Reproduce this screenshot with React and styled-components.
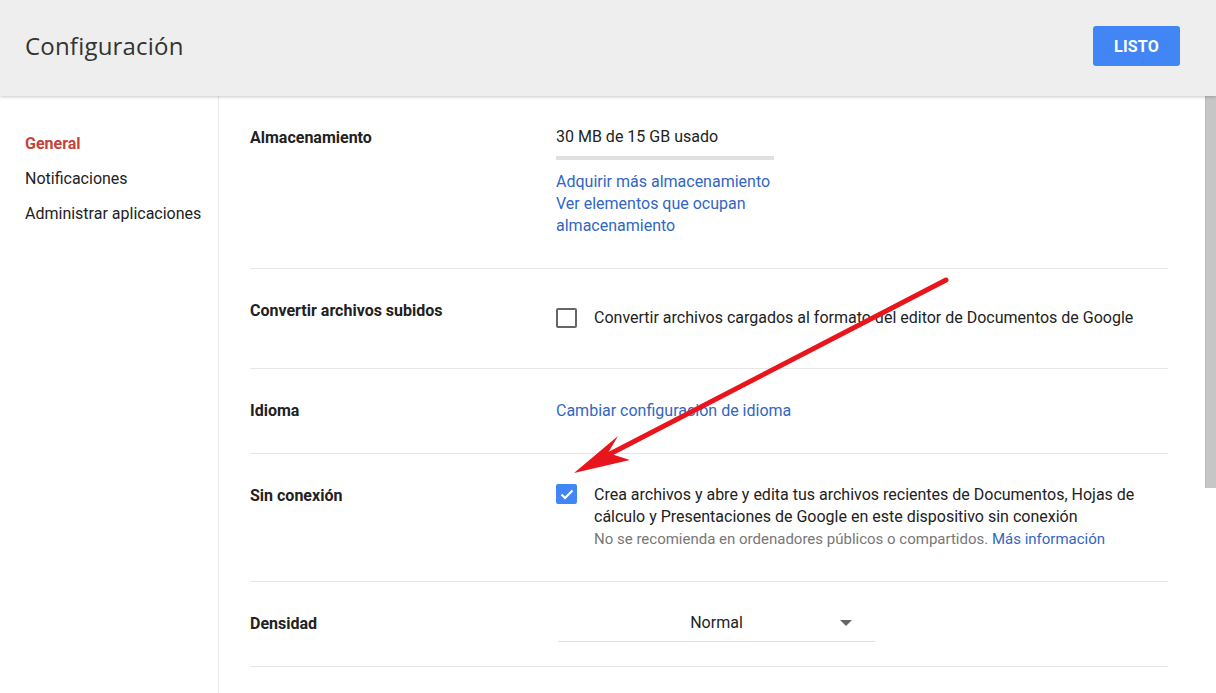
import React from "react";
import styled, { createGlobalStyle } from "styled-components";

const Global = createGlobalStyle`
  html, body { margin: 0; padding: 0; background: #fff; overflow: hidden; }
  body { font-family: Roboto, "Noto Sans", Arial, sans-serif; color: #222; }
  * { box-sizing: border-box; }
`;

const Page = styled.div`
  position: relative;
  width: 1216px;
  height: 693px;
  display: flex;
  flex-direction: column;
  overflow: hidden;
`;

const Header = styled.header`
  height: 96px;
  flex: none;
  background: #eeeeee;
  display: flex;
  align-items: center;
  justify-content: space-between;
  padding: 0 36px 0 25px;
  box-shadow: 0 1px 3px rgba(0, 0, 0, 0.22);
  position: relative;
  z-index: 2;
`;

const Title = styled.h1`
  margin: 0 0 6px 0;
  font-family: "Open Sans", Roboto, sans-serif;
  font-weight: 400;
  font-size: 24px;
  letter-spacing: 0.2px;
  color: #333;
`;

const DoneButton = styled.button`
  width: 87px;
  height: 40px;
  margin-top: -4px;
  border: none;
  border-radius: 3px;
  background: #4285f4;
  color: #fff;
  font-family: Roboto, sans-serif;
  font-weight: 700;
  font-size: 16px;
  letter-spacing: 0.2px;
`;

const Body = styled.div`
  flex: 1;
  display: flex;
  min-height: 0;
`;

const Sidebar = styled.nav`
  width: 219px;
  flex: none;
  border-right: 1px solid #e8e8e8;
  padding-top: 30px;
  display: flex;
  flex-direction: column;
`;

const NavItem = styled.div`
  height: 35px;
  line-height: 35px;
  padding-left: 25px;
  font-size: 16px;
  color: ${(p) => (p.$active ? "#c5433a" : "#222")};
  font-weight: ${(p) => (p.$active ? 700 : 400)};
`;

const Content = styled.main`
  flex: 1;
  padding-left: 31px;
  display: flex;
  flex-direction: column;
`;

const Row = styled.section`
  width: 918px;
  display: grid;
  grid-template-columns: 306px 1fr;
  padding: 30px 0 31px;
  min-height: ${(p) => p.$minH || 0}px;
  border-bottom: 1px solid #e6e6e6;
`;

const Label = styled.div`
  align-self: start;
  margin-top: 1px;
  font-size: 16px;
  font-weight: 700;
  line-height: 22px;
  color: #222;
`;

const Value = styled.div`
  align-self: center;
  font-size: 16px;
  line-height: 22px;
  color: #222;
`;

const UsageBar = styled.div`
  width: 218px;
  height: 4px;
  background: #e0e0e0;
  margin: 8px 0 11px;
`;

const Link = styled.a`
  display: block;
  color: #3266c2;
  text-decoration: none;
  font-size: 16px;
  line-height: 22px;
  width: ${(p) => (p.$w ? p.$w + "px" : "auto")};
`;

const InlineLink = styled.a`
  color: #3266c2;
  text-decoration: none;
`;

const CheckRow = styled.div`
  display: flex;
  align-items: flex-start;
  gap: 17px;
`;

const Box = styled.span`
  flex: none;
  width: 21px;
  height: 20px;
  margin-top: ${(p) => (p.$checked ? "0" : "1px")};
  border-radius: 2px;
  border: ${(p) => (p.$checked ? "none" : "2px solid #666")};
  background: ${(p) => (p.$checked ? "#4285f4" : "transparent")};
  display: flex;
  align-items: center;
  justify-content: center;
`;

const CheckText = styled.div`
  font-size: 16px;
  line-height: 22px;
  color: #222;
`;

const Hint = styled.div`
  font-size: 15px;
  line-height: 22px;
  color: #777;
`;

const Select = styled.div`
  width: 317px;
  height: 30px;
  margin: 0 0 -7px 2px;
  border-bottom: 1px solid #e0e0e0;
  display: flex;
  align-items: flex-start;
  justify-content: center;
  position: relative;
  font-size: 16px;
  line-height: 22px;
  color: #222;
`;

const Caret = styled.span`
  position: absolute;
  right: 23px;
  top: 8px;
  width: 0;
  height: 0;
  border-left: 6px solid transparent;
  border-right: 6px solid transparent;
  border-top: 6px solid #666;
`;

const ScrollTrack = styled.div`
  width: 11px;
  flex: none;
  background: #fff;
`;

const ScrollThumb = styled.div`
  height: 392px;
  background: #c6c6c6;
  border-left: 1px solid #b9b9b9;
`;

const Overlay = styled.svg`
  position: absolute;
  left: 0;
  top: 0;
  pointer-events: none;
  z-index: 5;
`;

export default function App() {
  return (
    <>
      <Global />
      <Page>
        <Header>
          <Title>Configuración</Title>
          <DoneButton>LISTO</DoneButton>
        </Header>
        <Body>
          <Sidebar>
            <NavItem $active>General</NavItem>
            <NavItem>Notificaciones</NavItem>
            <NavItem>Administrar aplicaciones</NavItem>
          </Sidebar>
          <Content>
            <Row>
              <Label>Almacenamiento</Label>
              <Value>
                <div>30 MB de 15 GB usado</div>
                <UsageBar />
                <Link>Adquirir más almacenamiento</Link>
                <Link $w={220}>Ver elementos que ocupan almacenamiento</Link>
              </Value>
            </Row>
            <Row $minH={100}>
              <Label>Convertir archivos subidos</Label>
              <Value>
                <CheckRow>
                  <Box />
                  <CheckText>
                    Convertir archivos cargados al formato del editor de Documentos de Google
                  </CheckText>
                </CheckRow>
              </Value>
            </Row>
            <Row>
              <Label>Idioma</Label>
              <Value>
                <Link>Cambiar configuración de idioma</Link>
              </Value>
            </Row>
            <Row>
              <Label>Sin conexión</Label>
              <Value>
                <CheckRow>
                  <Box $checked>
                    <svg width="14" height="11" viewBox="0 0 14 11">
                      <path
                        d="M1.5 5.5 L5 9 L12.5 1.5"
                        fill="none"
                        stroke="#fff"
                        strokeWidth="2.2"
                      />
                    </svg>
                  </Box>
                  <div>
                    <CheckText>
                      Crea archivos y abre y edita tus archivos recientes de Documentos, Hojas de
                      cálculo y Presentaciones de Google en este dispositivo sin conexión
                    </CheckText>
                    <Hint>
                      No se recomienda en ordenadores públicos o compartidos.{" "}
                      <InlineLink>Más información</InlineLink>
                    </Hint>
                  </div>
                </CheckRow>
              </Value>
            </Row>
            <Row>
              <Label>Densidad</Label>
              <Value>
                <Select>
                  Normal
                  <Caret />
                </Select>
              </Value>
            </Row>
          </Content>
          <ScrollTrack>
            <ScrollThumb />
          </ScrollTrack>
        </Body>
        <Overlay width="1216" height="693" viewBox="0 0 1216 693">
          <line
            x1="946"
            y1="280"
            x2="606"
            y2="456"
            stroke="#e8151c"
            strokeWidth="5"
            strokeLinecap="round"
          />
          <polygon points="574,473 618,436 608,453 630,460" fill="#e8151c" />
        </Overlay>
      </Page>
    </>
  );
}
